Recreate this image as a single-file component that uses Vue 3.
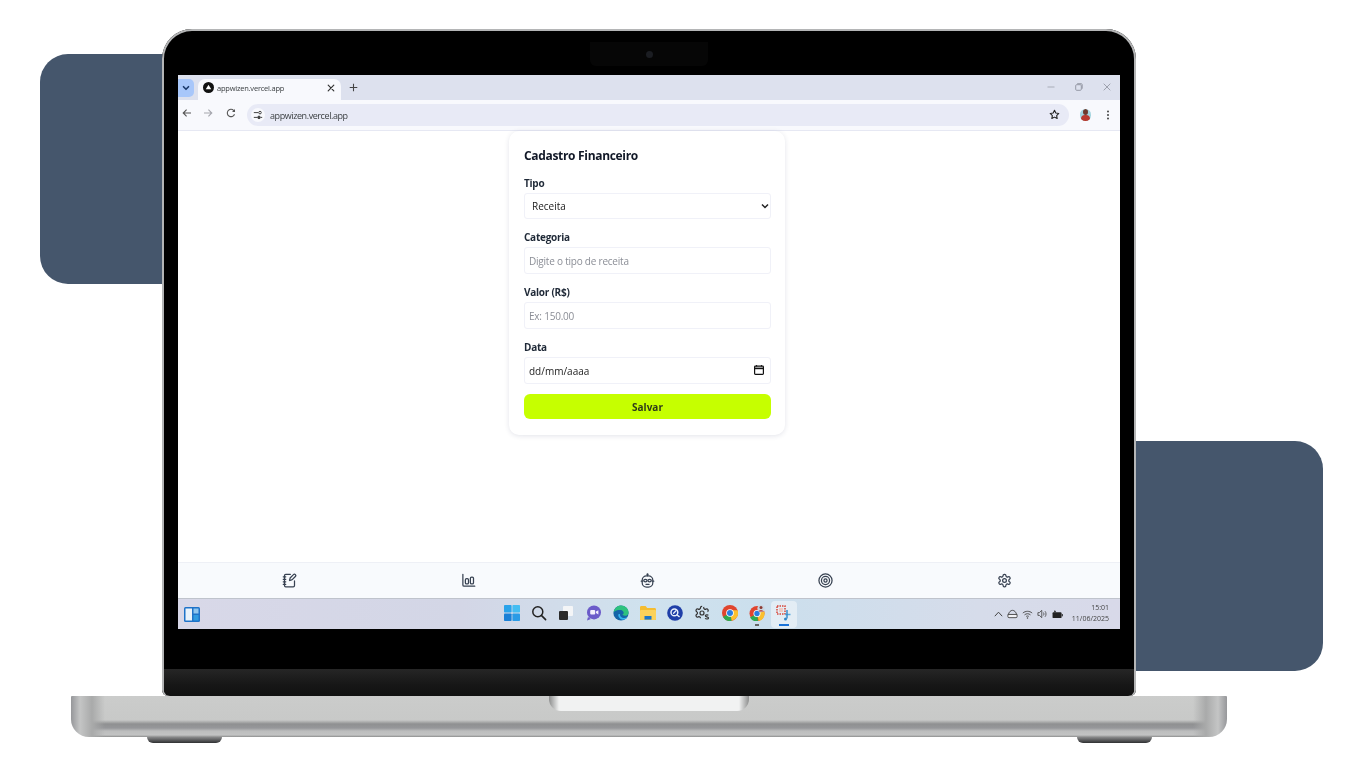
<template>
  <div class="stage">
    <div class="blob blob--left" />
    <div class="blob blob--right" />

    <div class="laptop">
      <div class="lid">
        <div class="camera-notch"><span class="camera-dot" /></div>
        <div class="screen">
          <!-- Browser chrome -->
          <div class="tabstrip">
            <button type="button" class="tab-search">
              <svg width="10" height="10" viewBox="0 0 12 12" fill="none"><path d="M3 4.500l3 3 3-3" stroke="#1b3a6b" stroke-width="2" stroke-linecap="round" stroke-linejoin="round"/></svg>
            </button>
            <div class="tab">
              <span class="favicon"><svg width="11" height="11" viewBox="0 0 12 12"><circle cx="6" cy="6" r="6" fill="#111"/><path d="M6 3l3 5H3z" fill="#fff"/></svg></span>
              <span class="tab__title">appwizen.vercel.app</span>
              <svg class="tab__close" width="8" height="8" viewBox="0 0 10 10"><path d="M1.500 1.500l7 7M8.500 1.500l-7 7" stroke="#333" stroke-width="1.500" stroke-linecap="round"/></svg>
            </div>
            <svg class="new-tab" width="9" height="9" viewBox="0 0 10 10"><path d="M5 .8v8.400M.8 5h8.400" stroke="#444" stroke-width="1.200"/></svg>
            <div class="win-controls">
              <svg width="8" height="8" viewBox="0 0 8 8"><path d="M.5 4h7" stroke="#a9adb8" stroke-width="1"/></svg>
              <svg width="8" height="8" viewBox="0 0 8 8" fill="none"><rect x=".7" y="1.700" width="5.600" height="5.600" rx="1" stroke="#9599a5"/><path d="M2.200.7h4a1 1 0 0 1 1 1v4" stroke="#9599a5"/></svg>
              <svg width="8" height="8" viewBox="0 0 8 8"><path d="M.7.7l6.600 6.600M7.300.7L.7 7.300" stroke="#9599a5" stroke-width=".9"/></svg>
            </div>
          </div>
          <div class="toolbar">
            <svg class="tb-back" width="10" height="10" viewBox="0 0 10 10" fill="none"><path d="M9 5H1.500M4.600 1.600L1.200 5l3.400 3.400" stroke="#555" stroke-width="1.100"/></svg>
            <svg class="tb-forward" width="10" height="10" viewBox="0 0 10 10" fill="none"><path d="M1 5h7.500M5.400 1.600L8.800 5 5.400 8.400" stroke="#a5a7ae" stroke-width="1.100"/></svg>
            <svg class="tb-reload" width="10" height="10" viewBox="0 0 10 10" fill="none"><path d="M8.500 6.200A3.700 3.700 0 1 1 7.600 2.300L8.800 3.500" stroke="#555" stroke-width="1.100"/><path d="M9 .9v3H6" fill="#555"/></svg>
            <div class="omnibox">
              <span class="site-icon">
                <svg width="10" height="10" viewBox="0 0 10 10" fill="none"><path d="M.8 2.600h4.400M8 7.400h1.200M.8 7.400h3.600" stroke="#444"/><circle cx="7" cy="2.600" r="1.300" stroke="#444"/><circle cx="6" cy="7.400" r="1.300" stroke="#444" fill="#444"/></svg>
              </span>
              <span class="omnibox__url">appwizen.vercel.app</span>
              <svg class="omnibox__star" width="11" height="11" viewBox="0 0 24 24" fill="none"><path d="M12 2.800l2.900 6 6.500.9-4.700 4.600 1.100 6.500-5.800-3.100-5.800 3.100 1.100-6.500L2.600 9.700l6.500-.9z" stroke="#222" stroke-width="2.400" stroke-linejoin="round"/></svg>
            </div>
            <span class="avatar"><span class="avatar__head" /><span class="avatar__body" /></span>
            <svg class="tb-menu" width="4" height="10" viewBox="0 0 4 10"><circle cx="2" cy="1.500" r="1" fill="#444"/><circle cx="2" cy="5" r="1" fill="#444"/><circle cx="2" cy="8.500" r="1" fill="#444"/></svg>
          </div>

          <!-- Page -->
          <main class="page">
            <form class="card" @submit.prevent>
              <h2 class="card__title">Cadastro Financeiro</h2>
              <label class="field">
                <span class="field__label">Tipo</span>
                <span class="control-wrap">
                  <select v-model="tipo" class="control control--select">
                    <option>Receita</option>
                    <option>Despesa</option>
                  </select>
                  <svg class="select-arrow" width="8" height="6" viewBox="0 0 8 6" fill="none"><path d="M1 1.500l3 3 3-3" stroke="#222" stroke-width="1.500"/></svg>
                </span>
              </label>
              <label class="field">
                <span class="field__label">Categoria</span>
                <input class="control" type="text" placeholder="Digite o tipo de receita" />
              </label>
              <label class="field">
                <span class="field__label">Valor (R$)</span>
                <input class="control" type="text" placeholder="Ex: 150.00" />
              </label>
              <label class="field field--last">
                <span class="field__label">Data</span>
                <span class="control-wrap">
                  <input class="control control--date" type="text" value="dd/mm/aaaa" />
                  <svg class="date-icon" width="12" height="12" viewBox="0 0 12 12" fill="none"><rect x="1.600" y="2.200" width="8.800" height="8.200" rx=".8" stroke="#111" stroke-width="1.200"/><path d="M1.600 4.400h8.800" stroke="#111" stroke-width="1.600"/><path d="M3.600 1v1.500M8.400 1v1.500" stroke="#111"/></svg>
                </span>
              </label>
              <button type="submit" class="save">Salvar</button>
            </form>
          </main>

          <!-- App bottom nav -->
          <nav class="bottom-nav">
            <svg class="nav-icon" viewBox="0 0 24 24"><path d="M13.400 2H6a2 2 0 0 0-2 2v16a2 2 0 0 0 2 2h12a2 2 0 0 0 2-2v-7.400"/><path d="M2 6h4M2 10h4M2 14h4M2 18h4"/><path d="M21.378 5.626a1 1 0 1 0-3.004-3.004l-5.010 5.012a2 2 0 0 0-.506.854l-.837 2.870a.5.5 0 0 0 .62.62l2.870-.837a2 2 0 0 0 .854-.506z"/></svg>
            <svg class="nav-icon" viewBox="0 0 24 24"><path d="M3 2v17a2 2 0 0 0 2 2h17"/><rect x="7" y="9" width="5" height="8.500" rx="2"/><rect x="15" y="6.500" width="5" height="11" rx="2"/></svg>
            <svg class="nav-icon" viewBox="0 0 24 24"><path d="M12 4.500V2"/><circle cx="12" cy="1.800" r=".6"/><rect x="3.500" y="4.500" width="17" height="18" rx="7"/><path d="M3.500 13H2M22 13h-1.500"/><ellipse cx="8.600" cy="12" rx="2.700" ry="2"/><ellipse cx="15.400" cy="12" rx="2.700" ry="2"/><path d="M9.500 18h5"/></svg>
            <svg class="nav-icon nav-icon--target" viewBox="0 0 24 24"><circle cx="12" cy="12" r="10.500"/><circle cx="12" cy="12" r="6.500"/><circle cx="12" cy="12" r="2.500"/></svg>
            <svg class="nav-icon" viewBox="0 0 24 24"><path d="M12.220 2h-.44a2 2 0 0 0-2 2v.18a2 2 0 0 1-1 1.730l-.43.25a2 2 0 0 1-2 0l-.15-.08a2 2 0 0 0-2.730.73l-.22.38a2 2 0 0 0 .73 2.730l.15.1a2 2 0 0 1 1 1.720v.51a2 2 0 0 1-1 1.740l-.15.09a2 2 0 0 0-.73 2.730l.22.38a2 2 0 0 0 2.730.73l.15-.08a2 2 0 0 1 2 0l.43.25a2 2 0 0 1 1 1.730V20a2 2 0 0 0 2 2h.44a2 2 0 0 0 2-2v-.18a2 2 0 0 1 1-1.730l.43-.25a2 2 0 0 1 2 0l.15.08a2 2 0 0 0 2.730-.73l.22-.39a2 2 0 0 0-.73-2.730l-.15-.08a2 2 0 0 1-1-1.740v-.5a2 2 0 0 1 1-1.740l.15-.09a2 2 0 0 0 .73-2.730l-.22-.38a2 2 0 0 0-2.730-.73l-.15.08a2 2 0 0 1-2 0l-.43-.25a2 2 0 0 1-1-1.730V4a2 2 0 0 0-2-2z"/><circle cx="12" cy="12" r="3"/></svg>
          </nav>

          <!-- Windows taskbar -->
          <footer class="taskbar">
            <svg class="widgets" width="16" height="15" viewBox="0 0 16 15"><rect width="16" height="15" rx="1.500" fill="#1e73c8"/><rect x="1.500" y="1.500" width="6.500" height="12" fill="#e9f3fb"/><rect x="9.500" y="1.500" width="5" height="5" fill="#8fc6ee"/><rect x="9.500" y="8" width="5" height="5.500" fill="#2f9be0"/></svg>

            <div class="task-icons">
              <svg viewBox="0 0 16 16"><rect x="0" y="0" width="7.600" height="7.600" rx=".8" fill="#2aa3ea"/><rect x="8.400" y="0" width="7.600" height="7.600" rx=".8" fill="#45bdf2"/><rect x="0" y="8.400" width="7.600" height="7.600" rx=".8" fill="#1a80d6"/><rect x="8.400" y="8.400" width="7.600" height="7.600" rx=".8" fill="#2a9be6"/></svg>
              <svg viewBox="0 0 16 16" fill="none"><circle cx="6.800" cy="6.800" r="5" stroke="#222" stroke-width="1.500"/><path d="M10.600 10.600L14.600 14.600" stroke="#222" stroke-width="1.600" stroke-linecap="round"/></svg>
              <svg viewBox="0 0 16 16"><rect x="5" y="1" width="10" height="10" rx="1" fill="#f4f5f7"/><rect x="1" y="6" width="9" height="9" rx="1" fill="#2b2b2b"/></svg>
              <svg viewBox="0 0 16 16"><circle cx="8" cy="7.400" r="7" fill="#6b5bc9"/><path d="M2 12l-1 3.400 4-1.400z" fill="#6b5bc9"/><rect x="4.200" y="5" width="5" height="4.600" rx="1" fill="#f2eefc"/><path d="M10 6.600l2.400-1.400v4.200L10 8z" fill="#f2eefc"/></svg>
              <svg viewBox="0 0 16 16"><circle cx="8" cy="8" r="7.600" fill="#1565a8"/><path d="M.6 7.200C1.400 3 4.600.4 8 .4c4.200 0 7.600 3 7.600 7 0 2.200-1.800 3.400-3.600 3.400-1.400 0-2.400-.5-2.600-1.200 1-.5 1.400-1.400 1.200-2.400C10 5.600 8.600 5 7.200 5 4.400 5 2 5.600.6 7.200z" fill="#2ec27e"/><path d="M5.200 9.600c0 3 2.400 5.400 5.600 5 1.600-.2 3-1.200 3.800-2.400-2 1-4.200 1-5.800.2-1.400-.7-2-1.800-1.800-3.400-1 .1-1.800.3-1.800.6z" fill="#36b4ee"/></svg>
              <svg viewBox="0 0 16 16"><path d="M0 2.400C0 1.600.6 1 1.400 1h4.200l1.600 2h7.400c.8 0 1.400.6 1.400 1.400V14c0 .6-.5 1-1 1H1c-.6 0-1-.4-1-1z" fill="#f5bd30"/><rect x="0" y="5" width="16" height="10" rx="1" fill="#fbd25a"/><rect x="4.500" y="11" width="7" height="3.600" fill="#1a76c8"/></svg>
              <svg viewBox="0 0 16 16" fill="none"><circle cx="8" cy="8" r="7.800" fill="#1f3fa8"/><circle cx="7.400" cy="7.400" r="3.400" stroke="#e8eefb" stroke-width="1.500"/><path d="M9 5.800L6.600 8.200M10 10l2.200 1.600" stroke="#e8eefb" stroke-width="1.300" stroke-linecap="round"/></svg>
              <svg viewBox="0 0 24 24" fill="none"><path d="M12.220 2h-.44a2 2 0 0 0-2 2v.18a2 2 0 0 1-1 1.730l-.43.25a2 2 0 0 1-2 0l-.15-.08a2 2 0 0 0-2.730.73l-.22.38a2 2 0 0 0 .73 2.730l.15.1a2 2 0 0 1 1 1.720v.51a2 2 0 0 1-1 1.740l-.15.09a2 2 0 0 0-.73 2.730l.22.38a2 2 0 0 0 2.730.73l.15-.08a2 2 0 0 1 2 0l.43.25a2 2 0 0 1 1 1.730V20M14.500 3a2 2 0 0 1 0 1.200v.18a2 2 0 0 0 1 1.530l.43.25a2 2 0 0 0 2 0l.15-.08a2 2 0 0 1 2.730.73l.22.38a2 2 0 0 1-.73 2.730" stroke="#333" stroke-width="1.800"/><circle cx="12" cy="12" r="3" stroke="#333" stroke-width="1.800"/><path d="M21.500 15.500c-.8-1.200-4.500-1-4.500.8 0 2 4.800 1 4.800 3.200 0 1.900-4 2-5 .4" stroke="#333" stroke-width="1.800"/></svg>
              <svg viewBox="0 0 16 16"><circle cx="8" cy="8" r="8" fill="#e0452e"/><path d="M8 8L1 12a8 8 0 0 0 8.800 3.800z" fill="#2eaa4f"/><path d="M8 8l1.800 7.800A8 8 0 0 0 15.600 5.200H8z" fill="#fbc02d"/><circle cx="8" cy="8" r="3.800" fill="#fff"/><circle cx="8" cy="8" r="3" fill="#2a7de1"/></svg>
              <span class="task-icons__running">
                <svg viewBox="0 0 16 16"><circle cx="8" cy="8.500" r="7.500" fill="#e0452e"/><path d="M8 8.500l-7 4a7.500 7.500 0 0 0 8 3.500z" fill="#2eaa4f"/><path d="M8 8.500l1.800 7.500a7.500 7.500 0 0 0 5.500-9.500H8z" fill="#fbc02d"/><circle cx="8" cy="8.500" r="3.500" fill="#fff"/><circle cx="8" cy="8.500" r="2.700" fill="#2a7de1"/><circle cx="12" cy="3.600" r="3.600" fill="#c9d6e2"/><circle cx="12" cy="2.400" r="1.500" fill="#8c3a32"/><path d="M9.600 6.600c.4-1.800 4.400-1.800 4.800 0z" fill="#b8352c"/></svg>
              </span>
              <span class="task-icons__active">
                <svg viewBox="0 0 16 16" fill="none"><rect x="1" y="1" width="8" height="8" stroke="#d8473a" stroke-width="1.500" stroke-dasharray="1.500 1"/><rect x="3" y="3" width="4" height="4" fill="#f1c9c2"/><path d="M9 9.500h5.500" stroke="#57a9dd" stroke-width="1.500"/><path d="M11 5v8.500" stroke="#2f86c8" stroke-width="1.400"/><circle cx="9.500" cy="14" r="1.500" fill="#2f86c8"/></svg>
              </span>
            </div>

            <div class="tray">
              <svg width="9" height="6" viewBox="0 0 9 6" fill="none"><path d="M.8 5.200L4.500 1.200l3.700 4" stroke="#444"/></svg>
              <svg width="11" height="10" viewBox="0 0 12 10" fill="none"><path d="M1 5.500h10v2.300a1.200 1.200 0 0 1-1.200 1.200H2.200A1.200 1.200 0 0 1 1 7.800z" fill="#f2f2f6" stroke="#444"/><path d="M1.600 5.500C2 3 4 1 6 1s4 2 4.400 4.500" stroke="#444"/></svg>
              <svg width="11" height="9" viewBox="0 0 12 10" fill="none"><path d="M.8 3.400c3-2.600 7.400-2.600 10.400 0M2.700 5.400c2-1.700 4.600-1.700 6.600 0M4.500 7.200c.9-.7 2.100-.7 3 0" stroke="#444"/><circle cx="6" cy="8.800" r=".8" fill="#444"/></svg>
              <svg width="11" height="10" viewBox="0 0 12 10" fill="none"><path d="M1 3.500h1.600L5.200 1v8L2.600 6.500H1z" stroke="#444" stroke-width=".9"/><path d="M7 3.400c.7.900.7 2.300 0 3.200M8.800 2c1.400 1.700 1.400 4.300 0 6" stroke="#444" stroke-width=".9"/></svg>
              <svg width="11" height="9" viewBox="0 0 12 10"><rect x=".5" y="2.500" width="10" height="6.500" rx="1" fill="#222"/><path d="M3 0l1.600 2.500H2z" fill="#222"/><rect x="10.700" y="4.500" width="1.200" height="2.500" fill="#222"/></svg>
              <div class="clock"><span>15:01</span><span>11/06/2025</span></div>
            </div>
          </footer>
        </div>
        <div class="chin" />
        <div class="hinge" />
      </div>

      <div class="base">
        <div class="thumb-notch" />
        <span class="foot foot--left" />
        <span class="foot foot--right" />
      </div>
    </div>
  </div>
</template>

<script setup>
import { ref } from 'vue';

const tipo = ref('Receita');
</script>

<style scoped>
.stage {
  position: relative;
  width: 1366px;
  height: 768px;
  overflow: hidden;
  background: #fff;
  font-family: 'Open Sans', 'Liberation Sans', sans-serif;
}

/* ── Backdrop shapes ── */
.blob {
  position: absolute;
  background: #45566c;
  width: 240px;
  height: 230px;
  border-radius: 28px;
}
.blob--left { left: 40px; top: 54px; }
.blob--right { left: 1083px; top: 441px; }

/* ── Laptop ── */
.laptop {
  position: absolute;
  left: 71px;
  top: 29px;
  width: 1156px;
}

.lid {
  position: relative;
  width: 974px;
  height: 667px;
  margin-left: 91px;
  padding: 46px 16px 0;
  box-sizing: border-box;
  background: #000;
  border-radius: 30px 30px 6px 6px;
  box-shadow: inset 0 0 0 2px #b4b5b6;
  display: flex;
  flex-direction: column;
}

.camera-notch {
  position: absolute;
  left: 428px;
  top: 13px;
  width: 118px;
  height: 24px;
  background: #060606;
  border-radius: 0 0 6px 6px;
  display: flex;
  align-items: center;
  justify-content: center;
}
.camera-dot {
  width: 7px;
  height: 7px;
  border-radius: 50%;
  background: #1b1d22;
}

.screen {
  height: 554px;
  display: flex;
  flex-direction: column;
  background: #fff;
  flex-shrink: 0;
  filter: blur(0.45px);
}

.chin {
  height: 40px;
  flex-shrink: 0;
}
.hinge {
  flex: 1;
  margin: 0 -14px;
  border-radius: 0 0 6px 6px;
  background: linear-gradient(180deg, #262626, #161616 60%, #111);
}

.base {
  position: relative;
  height: 41px;
  border-radius: 1px 1px 18px 18px;
  background:
    linear-gradient(90deg, #96979a 0, #c4c5c5 9px, #a9aaaa 21px, rgba(200, 201, 200, 0) 34px),
    linear-gradient(270deg, #96979a 0, #c4c5c5 9px, #a9aaaa 21px, rgba(196, 197, 196, 0) 34px),
    linear-gradient(180deg, #cbcccb 0, #c8c9c8 24px, #8f9091 28px, #96979a 32px, #bcbdbd 35px, #c2c3c3 39px, #8c8d8d 41px);
}
.thumb-notch {
  position: absolute;
  left: 478px;
  top: 0;
  width: 200px;
  height: 15px;
  border-radius: 0 0 12px 12px;
  background: linear-gradient(90deg, #8d8e8e, #f1f2f2 10px, #f1f2f2 190px, #8d8e8e);
}
.foot {
  position: absolute;
  top: 41px;
  width: 75px;
  height: 6px;
  border-radius: 0 0 8px 8px;
  background: linear-gradient(180deg, #8a8b8c, #2f3032);
}
.foot--left { left: 76px; }
.foot--right { left: 1006px; }

/* ── Browser chrome ── */
.tabstrip {
  height: 25px;
  flex-shrink: 0;
  display: flex;
  align-items: flex-end;
  background: #dde1ee;
}
.tab-search {
  align-self: flex-start;
  width: 16px;
  height: 18px;
  margin-top: 4px;
  padding: 0;
  border: none;
  border-radius: 0 5px 5px 0;
  background: #a8c7fa;
  display: flex;
  align-items: center;
  justify-content: center;
}
.tab {
  width: 143px;
  height: 21px;
  margin-left: 4px;
  padding: 0 6px 4px 5px;
  box-sizing: border-box;
  display: flex;
  align-items: center;
  background: #f8f9fd;
  border-radius: 7px 7px 0 0;
}
.favicon {
  display: flex;
  margin-right: 3px;
}
.tab__title {
  flex: 1;
  font-size: 7.5px;
  letter-spacing: -0.22px;
  color: #3c4043;
  white-space: nowrap;
}
.new-tab {
  align-self: flex-start;
  margin: 8px 0 0 8px;
}
.win-controls {
  margin-left: auto;
  align-self: flex-start;
  margin-top: 8px;
  display: flex;
  gap: 20px;
  padding-right: 9px;
}

.toolbar {
  height: 31px;
  flex-shrink: 0;
  padding-bottom: 5px;
  box-sizing: border-box;
  display: flex;
  align-items: center;
  background: #f8f9fd;
  border-bottom: 1px solid #e6e8f3;
}
.tb-back { margin-left: 4px; }
.tb-forward { margin-left: 11px; }
.tb-reload { margin-left: 13px; }
.omnibox {
  width: 822px;
  height: 22px;
  margin: 4px 0 0 11px;
  padding: 0 9px 0 4px;
  box-sizing: border-box;
  display: flex;
  align-items: center;
  border-radius: 11px;
  background: #e8eaf6;
}
.site-icon {
  width: 14px;
  height: 14px;
  border-radius: 50%;
  background: #f8f9fd;
  display: flex;
  align-items: center;
  justify-content: center;
}
.omnibox__url {
  flex: 1;
  margin: 1px 0 0 5px;
  font-size: 9px;
  letter-spacing: -0.42px;
  color: #3c4043;
}
.avatar {
  position: relative;
  width: 11px;
  height: 12px;
  margin: 4px 0 0 11px;
  border-radius: 6px;
  background: #a5d5df;
  overflow: hidden;
}
.avatar__head {
  position: absolute;
  left: 3px;
  top: 0;
  width: 5px;
  height: 6px;
  border-radius: 50%;
  background: #6e3a2c;
}
.avatar__body {
  position: absolute;
  left: 1px;
  top: 6px;
  width: 9px;
  height: 7px;
  border-radius: 4px 4px 0 0;
  background: #b93a2e;
}
.tb-menu {
  margin: 4px 0 0 15px;
}

/* ── Page ── */
.page {
  flex: 1;
  min-height: 0;
  padding-right: 4px;
  display: flex;
  justify-content: center;
  align-items: flex-start;
  background: #fff;
}
.card {
  width: 276px;
  padding: 14px 14px 16px 15px;
  box-sizing: border-box;
  background: #fff;
  border-radius: 10px;
  box-shadow: 0 1px 5px rgba(40, 50, 90, 0.13);
  display: flex;
  flex-direction: column;
}
.card__title {
  margin: 0 0 10px;
  font-size: 12px;
  line-height: 22px;
  font-weight: 700;
  letter-spacing: -0.32px;
  color: #111827;
}
.field {
  display: flex;
  flex-direction: column;
  margin-bottom: 12px;
}
.field--last { margin-bottom: 10px; }
.field__label {
  font-size: 10px;
  line-height: 12px;
  font-weight: 700;
  letter-spacing: -0.25px;
  color: #1f2937;
  margin-bottom: 4px;
}
.control {
  width: 100%;
  height: 27px;
  padding: 0 4px;
  box-sizing: border-box;
  display: block;
  border: 1px solid #f0f1f8;
  border-radius: 3px;
  background: #fff;
  font-family: inherit;
  font-size: 10px;
  color: #222;
  outline: none;
}
.control::placeholder {
  color: #8b8e96;
  letter-spacing: -0.22px;
}
.control--select {
  height: 26px;
  padding: 0 0 0 7px;
  appearance: none;
}
.control-wrap {
  position: relative;
  display: block;
}
.select-arrow {
  position: absolute;
  right: 2px;
  top: 10px;
  pointer-events: none;
}
.date-icon {
  position: absolute;
  right: 6px;
  top: 7px;
}
.save {
  height: 25px;
  border: none;
  border-radius: 6px;
  background: #c6ff00;
  font-family: inherit;
  font-size: 10px;
  font-weight: 700;
  color: #2f3a1a;
}

/* ── Bottom nav ── */
.bottom-nav {
  height: 36px;
  flex-shrink: 0;
  padding: 0 108px 0 104px;
  box-sizing: border-box;
  display: flex;
  align-items: center;
  justify-content: space-between;
  background: #f8fafd;
  border-top: 1px solid #eef0f6;
}
.nav-icon {
  width: 15px;
  height: 15px;
  fill: none;
  stroke: #374151;
  stroke-width: 2;
  stroke-linecap: round;
  stroke-linejoin: round;
}

/* ── Taskbar ── */
.taskbar {
  position: relative;
  height: 31px;
  flex-shrink: 0;
  display: flex;
  align-items: center;
  background: linear-gradient(90deg, #d8d8e8 0, #d3d6e6 30%, #cfe2ee 50%, #cbdfed 62%, #d6dcea 85%, #d8d9e9 100%);
  border-top: 1px solid #bfc3cc;
  box-sizing: border-box;
}
.widgets { margin-left: 6px; }
.task-icons {
  position: absolute;
  left: 326px;
  top: 6px;
  display: flex;
  gap: 11.2px;
}
.task-icons svg {
  width: 16px;
  height: 16px;
  display: block;
}
.task-icons__running,
.task-icons__active {
  position: relative;
  display: block;
}
.task-icons__running::after {
  content: '';
  position: absolute;
  left: 6px;
  bottom: -5px;
  width: 4px;
  height: 2px;
  background: #666;
}
.task-icons__active::before {
  content: '';
  position: absolute;
  inset: -4px -5px -7px -5px;
  background: rgba(255, 255, 255, 0.45);
  border-radius: 4px;
}
.task-icons__active::after {
  content: '';
  position: absolute;
  left: 3px;
  bottom: -5px;
  width: 10px;
  height: 2px;
  background: #1a73d8;
}
.task-icons__active svg { position: relative; }
.tray {
  margin-left: auto;
  padding-right: 11px;
  display: flex;
  align-items: center;
  gap: 4px;
}
.clock {
  margin-left: 5px;
  margin-top: -2px;
  display: flex;
  flex-direction: column;
  align-items: flex-end;
  font-size: 7px;
  line-height: 11px;
  color: #444;
}
</style>

<style>
html, body { margin: 0; background: #fff; }
</style>
